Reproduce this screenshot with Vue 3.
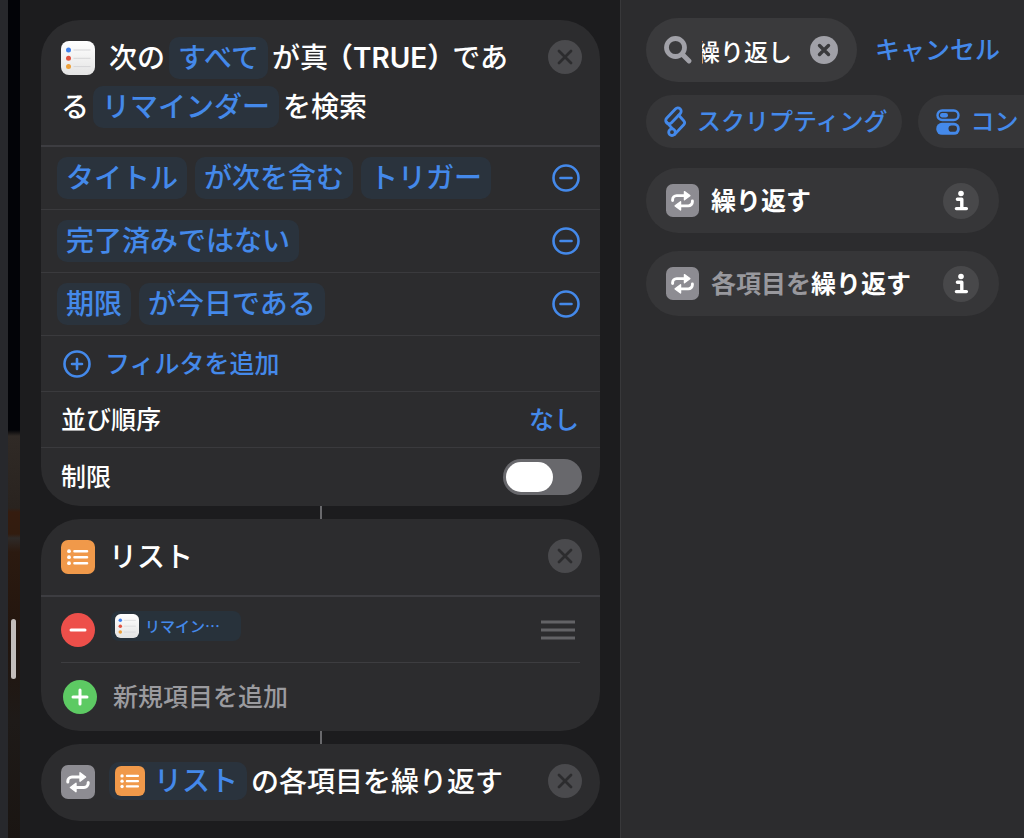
<template>
  <div class="screen" lang="ja">
    <div class="wallpaper">
      <span class="handle"></span>
    </div>

    <main class="editor">
      <section class="card">
        <header class="card-head">
          <p class="sentence">
            <svg class="app-icon" viewBox="0 0 34 34" aria-hidden="true">
              <use href="#icon-reminders" />
            </svg>
            <span>次の</span><button class="token">すべて</button><span>が真</span><span class="paren">（TRUE）</span><span>である</span><button class="token">リマインダー</button><span>を検索</span>
          </p>
          <button class="close" aria-label="削除">
            <svg viewBox="0 0 34 34"><use href="#icon-close" /></svg>
          </button>
        </header>

        <div v-for="(filter, i) in filters" :key="i" class="row filter">
          <button v-for="part in filter" :key="part" class="token">{{ part }}</button>
          <button class="round" aria-label="フィルタを削除">
            <svg viewBox="0 0 28 28">
              <circle cx="14" cy="14" r="12.5" />
              <path d="M8.5 14h11" />
            </svg>
          </button>
        </div>

        <div class="row option">
          <button class="add-filter">
            <svg viewBox="0 0 28 28">
              <circle cx="14" cy="14" r="12.5" />
              <path d="M9 14h10M14 9v10" />
            </svg>
            フィルタを追加
          </button>
        </div>
        <div class="row option">
          <label for="sort">並び順序</label>
          <select id="sort" v-model="sort">
            <option>なし</option>
          </select>
        </div>
        <div class="row option">
          <label for="limit">制限</label>
          <input id="limit" v-model="limited" type="checkbox" role="switch" class="switch" />
        </div>
      </section>

      <div class="connector"></div>

      <section class="card">
        <header class="card-head">
          <p class="sentence">
            <svg class="app-icon" viewBox="0 0 34 34" aria-hidden="true">
              <use href="#icon-list" />
            </svg>
            <span>リスト</span>
          </p>
          <button class="close" aria-label="削除">
            <svg viewBox="0 0 34 34"><use href="#icon-close" /></svg>
          </button>
        </header>
        <div class="item">
          <button class="badge" aria-label="項目を削除">
            <svg viewBox="0 0 34 34">
              <circle cx="17" cy="17" r="17" fill="#ed4f4a" />
              <path d="M10 17h14" />
            </svg>
          </button>
          <button class="variable">
            <svg viewBox="0 0 34 34" aria-hidden="true"><use href="#icon-reminders" /></svg>
            リマイン…
          </button>
          <svg class="grip" viewBox="0 0 34 20" aria-hidden="true">
            <path d="M0 2h34M0 10h34M0 18h34" />
          </svg>
        </div>
        <div class="item">
          <button class="badge new-item">
            <svg viewBox="0 0 34 34">
              <circle cx="17" cy="17" r="17" fill="#5dca63" />
              <path d="M10 17h14M17 10v14" />
            </svg>
            新規項目を追加
          </button>
        </div>
      </section>

      <div class="connector"></div>

      <section class="card">
        <header class="card-head last">
          <p class="sentence">
            <svg class="app-icon" viewBox="0 0 34 34" aria-hidden="true">
              <use href="#icon-repeat" />
            </svg>
            <button class="token with-icon">
              <svg viewBox="0 0 34 34" aria-hidden="true"><use href="#icon-list" /></svg>リスト</button><span>の各項目を繰り返す</span>
          </p>
          <button class="close" aria-label="削除">
            <svg viewBox="0 0 34 34"><use href="#icon-close" /></svg>
          </button>
        </header>
      </section>
    </main>

    <aside class="library">
      <div class="search-bar">
        <div class="search">
          <svg class="magnifier" viewBox="0 0 28 28" aria-hidden="true">
            <circle cx="11.5" cy="11.5" r="9" />
            <path d="M18.5 18.5l6.500 6.500" />
          </svg>
          <input ref="searchInput" v-model="query" type="text" aria-label="検索" />
          <button class="clear" aria-label="消去" @click="query = ''">
            <svg viewBox="0 0 28 28">
              <circle cx="14" cy="14" r="14" />
              <path d="M9.5 9.5l9 9M18.5 9.5l-9 9" />
            </svg>
          </button>
        </div>
        <button class="cancel">キャンセル</button>
      </div>

      <div class="chips">
        <button class="chip">
          <svg class="script-icon" viewBox="0 0 22 32" aria-hidden="true">
            <path d="M2.6 12.2L11.400 3a3.3 3.3 0 0 1 4.900 4.500L7.500 16.700a3.3 3.3 0 0 1-4.900-4.500z" />
            <path d="M14.8 9.200l4.900 5.500a3 3 0 0 1 0 4l-9 9.700" />
            <path d="M2.2 15.800l6 6.600" />
            <circle cx="8" cy="26.2" r="3.3" />
          </svg>
          スクリプティング
        </button>
        <button class="chip">
          <svg class="control-icon" viewBox="0 0 24 26" aria-hidden="true">
            <rect x="1.5" y="1.5" width="21" height="9.5" rx="4.75" fill="none" stroke="#4489ea" stroke-width="2.4" />
            <rect x="4" y="4" width="8" height="4.5" rx="2.2" />
            <rect x="0.3" y="13.8" width="23.4" height="12" rx="5.6" />
            <rect x="12.5" y="16.6" width="8.5" height="6.2" rx="3.1" fill="#363638" />
          </svg>
          コントロール
        </button>
      </div>

      <ul class="results">
        <li v-for="action in actions" :key="action.prefix">
          <svg class="result-icon" viewBox="0 0 34 34" aria-hidden="true">
            <use href="#icon-repeat" />
          </svg>
          <span class="name"><span class="muted">{{ action.prefix }}</span>{{ action.match }}</span>
          <button class="info" aria-label="情報">
            <svg viewBox="0 0 36 36">
              <circle cx="18" cy="10.5" r="2.8" />
              <path d="M14.4 16.3h4.4v9M13.4 25.6h10" />
            </svg>
          </button>
        </li>
      </ul>
    </aside>

    <svg class="defs" aria-hidden="true">
      <defs>
        <linearGradient id="paper" x1="0" y1="0" x2="0" y2="1">
          <stop offset="0" stop-color="#ffffff" />
          <stop offset="1" stop-color="#e4e4e4" />
        </linearGradient>
        <symbol id="icon-reminders" viewBox="0 0 34 34">
          <rect width="34" height="34" rx="8" fill="url(#paper)" />
          <path d="M12.5 9h17M12.5 17.3h17M12.5 25.6h17" stroke="#d6d6d8" stroke-width="1" />
          <circle cx="7.5" cy="9" r="2.5" fill="#3f80ec" />
          <circle cx="7.5" cy="17.3" r="2.5" fill="#e2523f" />
          <circle cx="7.5" cy="25.6" r="2.5" fill="#eda03a" />
        </symbol>
        <symbol id="icon-list" viewBox="0 0 34 34">
          <rect width="34" height="34" rx="7" fill="#f0994a" />
          <path d="M13.5 11.2h12.5M13.5 17.2h12.5M13.5 23.2h12.5" stroke="#fff" stroke-width="2.6" stroke-linecap="round" />
          <circle cx="8" cy="11.2" r="1.9" fill="#fff" />
          <circle cx="8" cy="17.2" r="1.9" fill="#fff" />
          <circle cx="8" cy="23.2" r="1.9" fill="#fff" />
        </symbol>
        <symbol id="icon-repeat" viewBox="0 0 34 34">
          <rect width="34" height="34" rx="7" fill="#8d8c92" />
          <path d="M6.8 17v-.8a4.2 4.2 0 0 1 4.2-4.2h8M27.2 17.5v.8a4.2 4.2 0 0 1-4.2 4.2h-8" fill="none" stroke="#fff" stroke-width="3" stroke-linecap="round" />
          <path d="M19 7.8l5.6 4.2-5.6 4.2zM15 18.3l-5.6 4.2 5.6 4.2z" fill="#fff" stroke="#fff" stroke-width="1.4" stroke-linejoin="round" />
        </symbol>
        <symbol id="icon-close" viewBox="0 0 34 34">
          <circle cx="17" cy="17" r="17" fill="#4a4a4d" />
          <path d="M11 11l12 12M23 11l-12 12" stroke="#2c2c2e" stroke-width="2.8" stroke-linecap="round" />
        </symbol>
      </defs>
    </svg>
  </div>
</template>

<script setup>
import { ref, onMounted } from 'vue';

const filters = [
  ['タイトル', 'が次を含む', 'トリガー'],
  ['完了済みではない'],
  ['期限', 'が今日である'],
];

const actions = [
  { prefix: '', match: '繰り返す' },
  { prefix: '各項目を', match: '繰り返す' },
];

const sort = ref('なし');
const limited = ref(false);
const query = ref('繰り返し');
const searchInput = ref(null);

// 入力欄は末尾が見える位置までスクロールしておく
onMounted(() => {
  searchInput.value.scrollLeft = searchInput.value.scrollWidth;
});
</script>

<style>
body {
  margin: 0;
  background: #1c1c1e;
}
</style>

<style scoped>
.screen {
  display: grid;
  grid-template-columns: 20px minmax(0, 600fr) minmax(0, 404fr);
  min-height: 100vh;
  overflow: hidden;
  color: #fff;
  font-family: Inter, "Noto Sans CJK JP", sans-serif;
  font-size: 25px;
  font-weight: 500;
  line-height: 30px;
}

.screen * {
  box-sizing: border-box;
}

button,
input,
select {
  margin: 0;
  padding: 0;
  border: none;
  background: none;
  color: inherit;
  font: inherit;
}

svg {
  display: block;
  flex: none;
}

.defs {
  position: absolute;
  width: 0;
  height: 0;
}

.wallpaper {
  position: relative;
  border-left: 8px solid #27282c;
  background: linear-gradient(#020307 0 430px, #302a26 436px, #29231f 508px, #351c0f 512px, #321c0f 534px, #2e2a28 538px, #2b1a10 552px, #22150e 640px, #1e1a18 720px, #1a1512 100%);
}

.handle {
  position: absolute;
  top: 619px;
  left: 3px;
  width: 5px;
  height: 60px;
  border-radius: 3px;
  background: #c3bdba;
}

.editor {
  padding: 20px 20px 16px 21px;
  background: #1c1c1e;
}

.card {
  border-radius: 39px;
  background: #2c2c2e;
}

.connector {
  width: 2px;
  height: 13px;
  margin: 0 auto;
  background: #69696c;
}

.card-head {
  display: flex;
  align-items: flex-start;
  gap: 20px;
  padding: 14px 18px 13px 20px;
  border-bottom: 2px solid #3d3d41;
}

.card-head.last {
  padding-bottom: 14px;
  border-bottom: none;
}

.sentence {
  flex: 1;
  margin: 0;
  font-size: 28px;
  line-height: 49px;
}

.app-icon {
  display: inline-block;
  width: 34px;
  height: 34px;
  margin-right: 14px;
  vertical-align: -7px;
}

.paren {
  margin: 0 11px;
  font-feature-settings: "halt";
  font-weight: 600;
}

.close {
  width: 34px;
  height: 34px;
  margin-top: 6px;
}

.token {
  height: 42px;
  padding: 0 9px;
  border-radius: 10px;
  background: #2a333d;
  color: #4489ea;
  font-size: 28px;
  line-height: 42px;
  white-space: nowrap;
}

.sentence .token {
  margin: 0 4px;
}

.sentence .with-icon {
  display: inline-flex;
  align-items: center;
  gap: 9px;
  height: 38px;
  margin-left: 0;
  padding-left: 6px;
  vertical-align: -4px;
}

.with-icon svg {
  width: 30px;
  height: 30px;
}

.row {
  display: flex;
  align-items: center;
  border-bottom: 1px solid #3a3a3d;
}

.filter {
  gap: 8px;
  height: 63px;
  padding: 0 20px 0 16px;
}

.round {
  margin-left: auto;
}

.round svg,
.add-filter svg {
  width: 28px;
  height: 28px;
  fill: none;
  stroke: #4489ea;
  stroke-width: 2.6;
  stroke-linecap: round;
}

.option {
  justify-content: space-between;
  height: 56px;
  padding: 0 20px;
}

.option:last-child {
  height: 58px;
  padding-right: 18px;
  border-bottom: none;
}

.add-filter {
  display: flex;
  align-items: center;
  gap: 14px;
  padding-left: 2px;
  color: #4489ea;
}

#sort {
  appearance: none;
  color: #4489ea;
}

.switch {
  display: flex;
  align-items: center;
  width: 79px;
  height: 36px;
  padding: 3px;
  border-radius: 18px;
  background: #68686c;
  appearance: none;
}

.switch::before {
  content: "";
  width: 47px;
  height: 30px;
  border-radius: 15px;
  background: #fff;
}

.switch:checked {
  justify-content: flex-end;
  background: #5dca63;
}

.item {
  display: flex;
  align-items: center;
  gap: 16px;
  height: 66px;
  margin: 0 20px;
  border-bottom: 1px solid #3d3d40;
}

.item:last-child {
  height: 68px;
  border-bottom: none;
}

.badge svg {
  width: 34px;
  height: 34px;
}

.badge path {
  fill: none;
  stroke: #fff;
  stroke-width: 3;
  stroke-linecap: round;
}

.new-item {
  display: flex;
  align-items: center;
  gap: 16px;
  padding-left: 2px;
  color: #9b9b9f;
}

.variable {
  display: flex;
  align-items: center;
  align-self: flex-start;
  gap: 6px;
  width: 130px;
  height: 30px;
  margin-top: 14px;
  padding: 0 4px;
  border-radius: 8px;
  background: #28323b;
  color: #4489ea;
  font-family: "Noto Sans CJK JP", sans-serif;
  font-size: 15px;
}

.variable svg {
  width: 24px;
  height: 24px;
}

.grip {
  width: 34px;
  height: 20px;
  margin: 0 5px 0 auto;
  stroke: #636366;
  stroke-width: 3;
}

.library {
  overflow: hidden;
  padding: 18px 0 18px 25px;
  border-left: 1px solid #38383a;
  background: #2c2c2e;
}

.search-bar {
  display: flex;
  align-items: center;
  gap: 18px;
  padding-right: 24px;
}

.search {
  display: flex;
  flex: 1;
  align-items: center;
  min-width: 0;
  height: 64px;
  padding: 0 19px 0 18px;
  border-radius: 32px;
  background: #3a3a3c;
}

.magnifier {
  width: 28px;
  height: 28px;
  margin-right: 10px;
  fill: none;
  stroke: #a1a1a8;
  stroke-width: 4.8;
  stroke-linecap: round;
}

.search input {
  flex: 1;
  min-width: 0;
  height: 36px;
  margin-right: 18px;
  outline: none;
  font-family: "Noto Sans CJK JP", sans-serif;
  font-size: 24px;
}

.clear svg {
  width: 28px;
  height: 28px;
  fill: #a1a1a8;
}

.clear path {
  stroke: #3a3a3c;
  stroke-width: 3.4;
  stroke-linecap: round;
}

.cancel {
  color: #4489ea;
  white-space: nowrap;
}

.chips {
  display: flex;
  gap: 16px;
  margin-top: 13px;
}

.chip {
  display: flex;
  flex: none;
  align-items: center;
  gap: 11px;
  height: 53px;
  padding: 0 14px 0 18px;
  border-radius: 27px;
  background: #363638;
  color: #4489ea;
  font-size: 24px;
  white-space: nowrap;
}

.script-icon {
  width: 22px;
  height: 32px;
  fill: none;
  stroke: #4489ea;
  stroke-width: 2.8;
  stroke-linecap: round;
  stroke-linejoin: round;
}

.control-icon {
  width: 24px;
  height: 26px;
  fill: #4489ea;
}

.results {
  display: flex;
  flex-direction: column;
  gap: 18px;
  margin: 20px 25px 0 0;
  padding: 0;
  list-style: none;
}

.results li {
  display: flex;
  align-items: center;
  gap: 12px;
  height: 65px;
  padding: 0 20px;
  border-radius: 33px;
  background: #363638;
}

.result-icon {
  width: 33px;
  height: 33px;
}

.name {
  flex: 1;
  font-weight: 700;
  white-space: nowrap;
}

.muted {
  color: #98989d;
}

.info {
  width: 36px;
  height: 36px;
  border-radius: 18px;
  background: #48484a;
}

.info svg {
  fill: #fff;
}

.info path {
  fill: none;
  stroke: #fff;
  stroke-width: 3.4;
  stroke-linecap: round;
  stroke-linejoin: round;
}
</style>
